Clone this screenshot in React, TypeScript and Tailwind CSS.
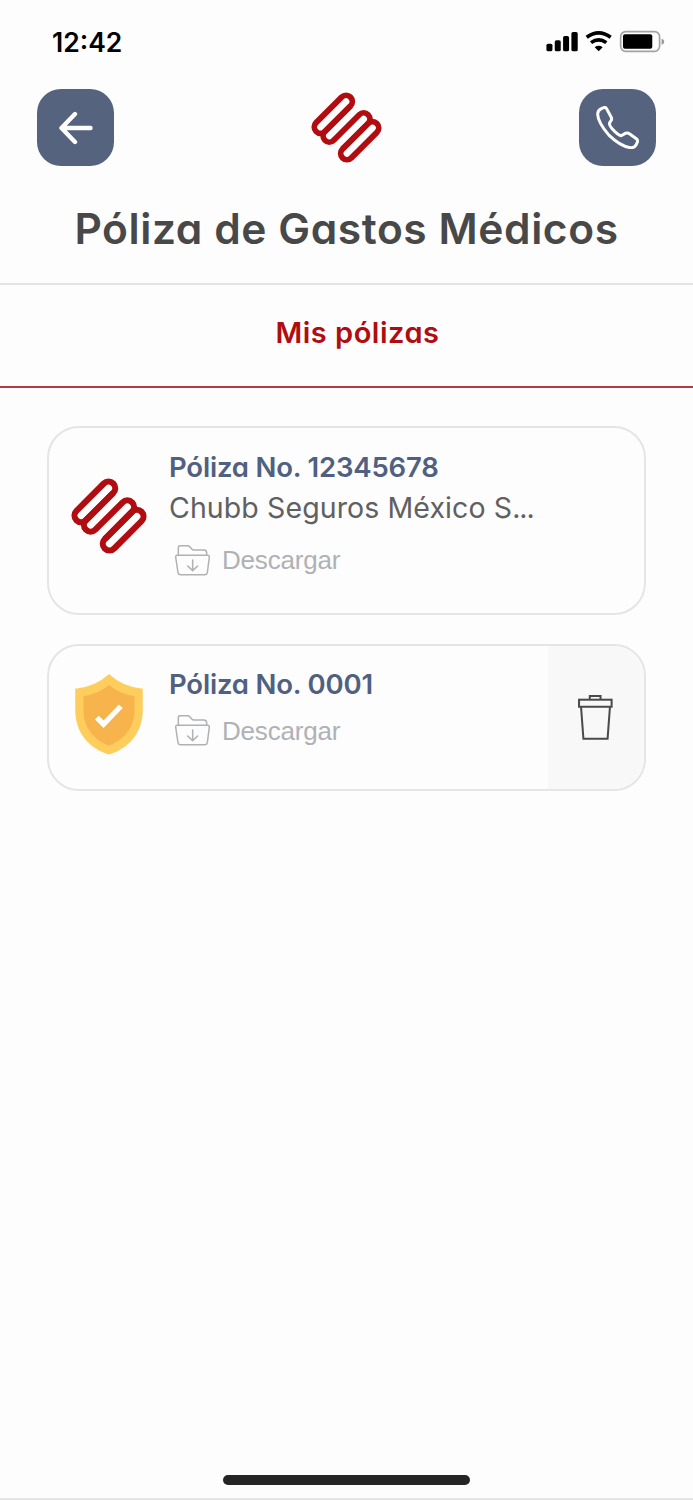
import type { ReactNode } from "react";

function Logo({ className }: { className?: string }) {
  return (
    <svg viewBox="-114 -114 228 228" className={className} fill="none" stroke="#b10c10" strokeWidth="18.5">
      <g transform="rotate(-45)">
        <rect x="-78" y="-80" width="156" height="40" rx="20" />
        <path d="M58 -40H-58A20 20 0 0 0 -58 0H58A20 20 0 0 1 58 40H-58" />
        <rect x="-78" y="40" width="156" height="40" rx="20" />
      </g>
    </svg>
  );
}

function Shield({ className }: { className?: string }) {
  return (
    <svg viewBox="107 116 203 242" className={className}>
      <path d="M208.500 116Q250 155 310 160V225C310 290 270 340 208.500 358C147 340 107 290 107 225V160Q167 155 208.500 116Z" fill="#ffcd5c" />
      <path d="M208.500 149Q240 176 285 182V227C285 275 256 313 208.500 331C161 313 132 275 132 227V182Q177 176 208.500 149Z" fill="#f8b44c" />
      <path d="M172 247L192 267L244 213" fill="none" stroke="#fff" strokeWidth="16" />
    </svg>
  );
}

function FolderDown() {
  return (
    <svg viewBox="404 373 105 93" className="h-[31px] w-[35px]" fill="none" stroke="#b0b1b5" strokeWidth="4.5" strokeLinejoin="round" strokeLinecap="round">
      <path d="M414 403V381Q414 375 420 375H442Q446 375 449 379L455 386Q457 388 461 388H490Q499 388 499 396V403" />
      <path d="M410 404H503Q507 404 507 409L501 456Q500 462 494 462H420Q414 462 413 456L406 409Q406 404 410 404Z" />
      <path d="M457 418V449M442 436L457 450L472 436" />
    </svg>
  );
}

function Trash() {
  return (
    <svg viewBox="146 181 104 134" className="mr-[1.500px] h-[45px] w-[35px]" fill="none" stroke="#4a4a4a" strokeWidth="6">
      <path d="M181 194V184H213V194" />
      <rect x="149" y="195" width="97" height="21" />
      <path d="M155 217L162 311H234L241 217" />
    </svg>
  );
}

function StatusBar() {
  return (
    <div className="flex h-[84px] items-center justify-between pl-[52px] pr-7">
      <span className="text-[26.5px] font-semibold leading-8 text-black">12:42</span>
      <svg viewBox="48 30 356 70" className="h-[23.3px] w-[118.700px]">
        <rect x="49" y="71" width="18" height="23" rx="5" />
        <rect x="74" y="61" width="18" height="33" rx="5" />
        <rect x="99" y="48" width="18" height="46" rx="5" />
        <rect x="124" y="36" width="19" height="58" rx="5" />
        <g fill="none" stroke="#000" strokeWidth="11">
          <path d="M170 52Q206 26 242 52" />
          <path d="M183 68Q206 51 229 68" />
        </g>
        <path d="M194 82Q206 73 218 82L206 94Z" />
        <rect x="272" y="35" width="117" height="59" rx="15" fill="none" stroke="#a3a3a3" strokeWidth="5" />
        <rect x="279" y="43" width="88" height="43" rx="6" />
        <path d="M395 56Q403 58 403 65Q403 72 395 74Z" fill="#999" />
      </svg>
    </div>
  );
}

function HeaderButton({ children }: { children: ReactNode }) {
  return (
    <button className="flex size-[77px] items-center justify-center rounded-3xl bg-[#55637f]">
      {children}
    </button>
  );
}

function Download() {
  return (
    <button className="flex items-center pl-1.5">
      <FolderDown />
      <span className="ml-3 font-['Liberation_Sans',sans-serif] text-[26px] leading-8 tracking-[-0.200px] text-[#b0b1b5]">
        Descargar
      </span>
    </button>
  );
}

function PolicyNumber({ children }: { children: ReactNode }) {
  return <p className="text-[27.5px] font-semibold leading-10 tracking-[-0.180px] text-[#506080]">{children}</p>;
}

export default function App() {
  return (
    <div className="flex h-[1500px] w-[693px] flex-col overflow-hidden bg-[#fdfdfd] font-['Inter',sans-serif] [font-feature-settings:'cv11']">
      <StatusBar />

      <header className="border-b-2 border-[#e3e3e3] pt-[5px]">
        <div className="flex items-center justify-between px-[37px]">
          <HeaderButton>
            <svg viewBox="0 0 34 34" className="size-[34px]" fill="none" stroke="#fff" strokeWidth="4.4" strokeLinecap="round" strokeLinejoin="round">
              <path d="M16 3L2.500 17L16 31M2.500 17H31.500" />
            </svg>
          </HeaderButton>
          <Logo className="mb-px size-[71px]" />
          <HeaderButton>
            <svg viewBox="196 257 130 130" className="size-[43px]" fill="none" stroke="#fff" strokeWidth="9" strokeLinejoin="round">
              <path d="M212 265L219 262Q225 260 228 265L242 291Q245 297 241 302L237 308Q235 315 244 325Q262 345 272 347L286 339Q292 337 297 341L318 356Q323 360 321 366L317 375Q312 384 300 383Q270 379 235 345Q202 307 201 282Q201 270 212 265Z" />
            </svg>
          </HeaderButton>
        </div>
        <h1 className="mt-[33px] mb-6 whitespace-nowrap text-center text-[42.500px] font-semibold leading-[60px] tracking-[0.580px] text-[#484848]">
          Póliza de Gastos Médicos
        </h1>
      </header>

      <nav className="flex h-[103px] justify-center border-b-2 border-[#b5393d] pt-7 pl-[22px]">
        <a className="text-[29px] font-semibold leading-10 tracking-[0.500px] text-[#b10c10]">Mis pólizas</a>
      </nav>

      <main className="flex flex-col gap-[29px] px-[47px] pt-[38px]">
        <article className="flex h-[189px] overflow-hidden rounded-[32px] border-2 border-[#e5e5e5]">
          <Logo className="mt-[50px] ml-[22px] size-[76px]" />
          <div className="ml-[22px] pt-[19px]">
            <PolicyNumber>Póliza No. 12345678</PolicyNumber>
            <p className="mb-[15px] text-[28.500px] leading-[42px] tracking-[0.100px] text-[#606060]">
              Chubb Seguros México S<span className="tracking-[-1px]">...</span>
            </p>
            <Download />
          </div>
        </article>

        <article className="flex h-[147px] overflow-hidden rounded-[32px] border-2 border-[#e5e5e5]">
          <Shield className="mt-7 ml-[26px] h-[80.500px] w-[68px]" />
          <div className="ml-[26px] pt-[18px]">
            <PolicyNumber>Póliza No. 0001</PolicyNumber>
            <div className="mt-[10.500px]">
              <Download />
            </div>
          </div>
          <button className="ml-auto flex w-24 items-center justify-center bg-[#f8f8f8]">
            <Trash />
          </button>
        </article>
      </main>

      <footer className="mt-auto flex h-[25px] flex-col items-center justify-between">
        <div className="h-[9.500px] w-[247px] rounded-full bg-[#252525]" />
        <div className="h-0.5 w-full bg-[#e5e5e5]" />
      </footer>
    </div>
  );
}
